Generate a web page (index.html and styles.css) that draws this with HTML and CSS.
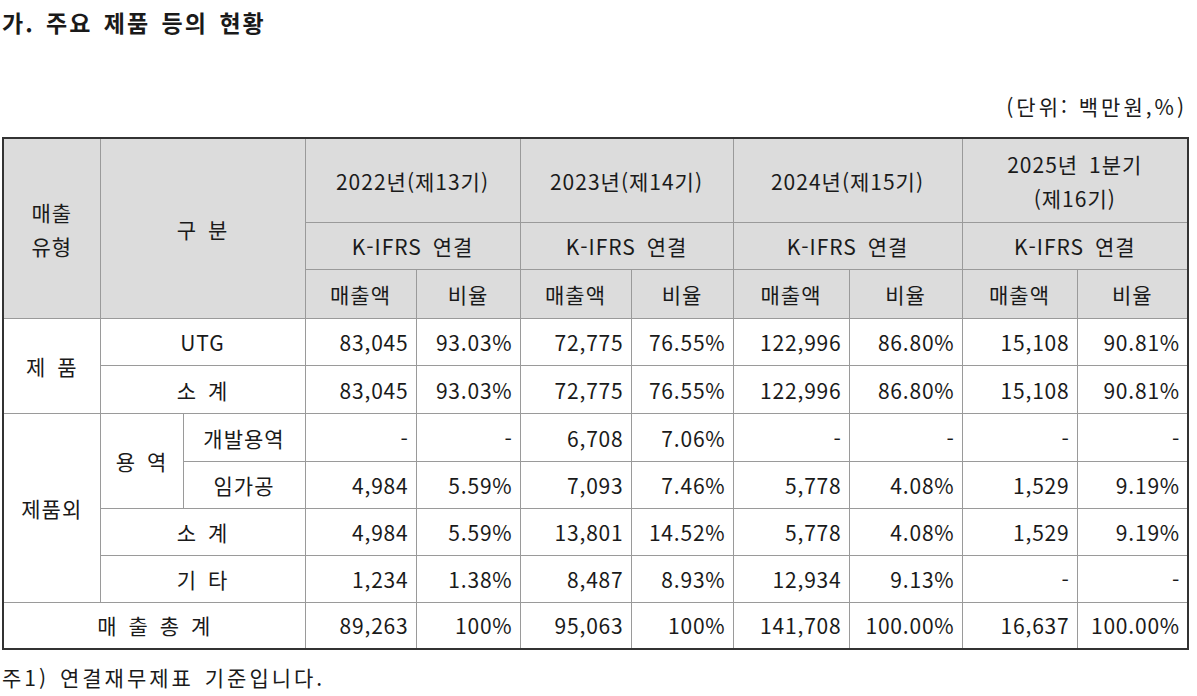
FILE: index.html
```html
<!DOCTYPE html>
<html lang="ko">
<head>
<meta charset="utf-8">
<title>주요 제품 등의 현황</title>
<link rel="stylesheet" href="styles.css">
</head>
<body>
<div class="page">
  <h1 class="title">가. 주요 제품 등의 현황</h1>
  <p class="unit">(단위: 백만원,%)</p>
  <table class="sales">
    <colgroup>
      <col class="c1"><col class="c2"><col class="c3">
      <col class="c4"><col class="c5"><col class="c6"><col class="c7">
      <col class="c8"><col class="c9"><col class="c10"><col class="c11">
    </colgroup>
    <thead>
      <tr class="h1">
        <th rowspan="3" class="tall">매출<br>유형</th>
        <th rowspan="3" colspan="2">구 분</th>
        <th colspan="2">2022년(제13기)</th>
        <th colspan="2">2023년(제14기)</th>
        <th colspan="2">2024년(제15기)</th>
        <th colspan="2" class="tall">2025년 1분기<br>(제16기)</th>
      </tr>
      <tr class="h2">
        <th colspan="2">K-IFRS 연결</th>
        <th colspan="2">K-IFRS 연결</th>
        <th colspan="2">K-IFRS 연결</th>
        <th colspan="2">K-IFRS 연결</th>
      </tr>
      <tr class="h3">
        <th>매출액</th><th>비율</th>
        <th>매출액</th><th>비율</th>
        <th>매출액</th><th>비율</th>
        <th>매출액</th><th>비율</th>
      </tr>
    </thead>
    <tbody>
      <tr class="r1">
        <td class="lbl" rowspan="2">제 품</td>
        <td class="lbl" colspan="2">UTG</td>
        <td class="num">83,045</td><td class="num">93.03%</td>
        <td class="num">72,775</td><td class="num">76.55%</td>
        <td class="num">122,996</td><td class="num">86.80%</td>
        <td class="num">15,108</td><td class="num">90.81%</td>
      </tr>
      <tr class="r2">
        <td class="lbl" colspan="2">소 계</td>
        <td class="num">83,045</td><td class="num">93.03%</td>
        <td class="num">72,775</td><td class="num">76.55%</td>
        <td class="num">122,996</td><td class="num">86.80%</td>
        <td class="num">15,108</td><td class="num">90.81%</td>
      </tr>
      <tr class="r3">
        <td class="lbl" rowspan="4">제품외</td>
        <td class="lbl sub" rowspan="2">용 역</td>
        <td class="lbl">개발용역</td>
        <td class="num">-</td><td class="num">-</td>
        <td class="num">6,708</td><td class="num">7.06%</td>
        <td class="num">-</td><td class="num">-</td>
        <td class="num">-</td><td class="num">-</td>
      </tr>
      <tr class="r4">
        <td class="lbl">임가공</td>
        <td class="num">4,984</td><td class="num">5.59%</td>
        <td class="num">7,093</td><td class="num">7.46%</td>
        <td class="num">5,778</td><td class="num">4.08%</td>
        <td class="num">1,529</td><td class="num">9.19%</td>
      </tr>
      <tr class="r5">
        <td class="lbl" colspan="2">소 계</td>
        <td class="num">4,984</td><td class="num">5.59%</td>
        <td class="num">13,801</td><td class="num">14.52%</td>
        <td class="num">5,778</td><td class="num">4.08%</td>
        <td class="num">1,529</td><td class="num">9.19%</td>
      </tr>
      <tr class="r6">
        <td class="lbl" colspan="2">기 타</td>
        <td class="num">1,234</td><td class="num">1.38%</td>
        <td class="num">8,487</td><td class="num">8.93%</td>
        <td class="num">12,934</td><td class="num">9.13%</td>
        <td class="num">-</td><td class="num">-</td>
      </tr>
      <tr class="r7">
        <td class="lbl" colspan="3">매 출 총 계</td>
        <td class="num">89,263</td><td class="num">100%</td>
        <td class="num">95,063</td><td class="num">100%</td>
        <td class="num">141,708</td><td class="num">100.00%</td>
        <td class="num">16,637</td><td class="num">100.00%</td>
      </tr>
    </tbody>
  </table>
  <p class="note">주1) 연결재무제표 기준입니다.</p>
</div>
</body>
</html>
```

FILE: styles.css
```css
html, body {
  margin: 0;
  padding: 0;
  background: #ffffff;
}

body {
  font-family: "Noto Sans CJK KR", "Liberation Sans", sans-serif;
  color: #1a1a1a;
  font-size: 21px;
  letter-spacing: 1px;
  word-spacing: 4px;
}

.page {
  padding: 0 0 0 2px;
  width: 1188px;
}

.title {
  margin: 0;
  padding: 8px 0 0 0;
  font-size: 23px;
  font-weight: bold;
  line-height: 28px;
  letter-spacing: 2px;
  word-spacing: 3px;
}

.unit {
  margin: 0;
  padding: 56px 3px 0 0;
  text-align: right;
  line-height: 28px;
  height: 45px;
  box-sizing: content-box;
  letter-spacing: 3px;
  word-spacing: 0;
}

.sales {
  border-collapse: collapse;
  table-layout: fixed;
  width: 1187px;
  border: 2px solid #333333;
}

.c1 { width: 97px; }
.c2 { width: 83px; }
.c3 { width: 122px; }
.c4 { width: 111px; }
.c5 { width: 104px; }
.c6 { width: 111px; }
.c7 { width: 102px; }
.c8 { width: 116px; }
.c9 { width: 113px; }
.c10 { width: 115px; }
.c11 { width: 111px; }

.sales th,
.sales td {
  border: 1px solid #9a9a9a;
  padding: 0 7px;
  line-height: 30px;
  font-weight: normal;
  white-space: nowrap;
  overflow: visible;
}

.sales th {
  background: #dcdcdc;
  text-align: center;
}

.sales th.tall {
  line-height: 34px;
}

.h1 th { height: 83px; }
.h2 th { height: 46px; }
.h3 th { height: 48px; }

.sales tbody tr { height: 47px; }
.sales tbody tr.r2,
.sales tbody tr.r3 { height: 48px; }
.sales tbody tr.r7 { height: 46px; }

.lbl {
  text-align: center;
}

.num {
  text-align: right;
  letter-spacing: 0.8px;
}

.note {
  margin: 0;
  padding: 13px 0 0 0;
  line-height: 28px;
  letter-spacing: 3px;
  word-spacing: 2px;
}
```
